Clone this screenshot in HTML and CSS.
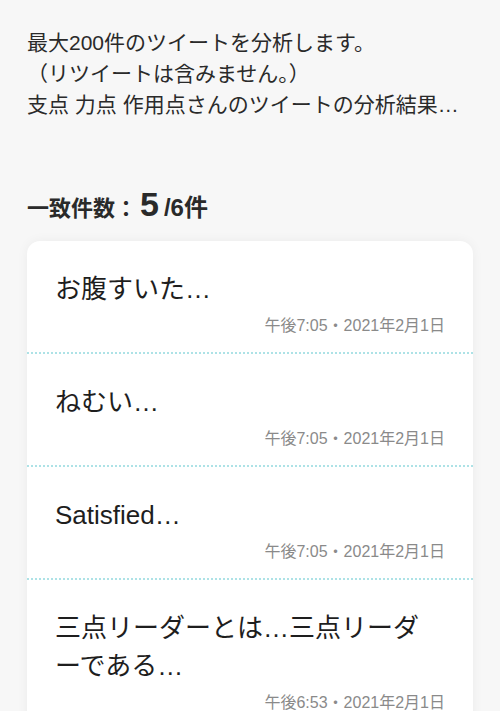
FILE: index.html
```html
<!DOCTYPE html>
<html lang="ja">
<head>
<meta charset="utf-8">
<title>分析結果</title>
<link rel="stylesheet" href="styles.css">
</head>
<body>
<main class="page">
  <p class="intro">最大200件のツイートを分析します。<br>（リツイートは含みません。）<br>支点 力点 作用点さんのツイートの分析結果…</p>
  <h2 class="count"><span class="count-label">一致件数：</span><span class="count-num">5</span><span class="count-total">/6件</span></h2>
  <section class="card">
    <article class="item">
      <p class="item-text">お腹すいた…</p>
      <p class="item-date">午後7:05・2021年2月1日</p>
    </article>
    <article class="item">
      <p class="item-text">ねむい…</p>
      <p class="item-date">午後7:05・2021年2月1日</p>
    </article>
    <article class="item">
      <p class="item-text">Satisfied…</p>
      <p class="item-date">午後7:05・2021年2月1日</p>
    </article>
    <article class="item">
      <p class="item-text">三点リーダーとは…三点リーダーである…</p>
      <p class="item-date">午後6:53・2021年2月1日</p>
    </article>
  </section>
</main>
</body>
</html>
```
FILE: styles.css
```css
html, body {
  margin: 0;
  padding: 0;
  background: #f7f7f7;
}
body {
  font-family: "Liberation Sans", "Noto Sans CJK JP", sans-serif;
  color: #222;
}
.page {
  padding: 27px 27px 0 27px;
}
.intro {
  margin: 0;
  font-size: 21px;
  line-height: 31px;
  color: #2a2a2a;
}
.count {
  margin: 66px 0 0 0;
  font-size: 22px;
  line-height: 36px;
  font-weight: bold;
  color: #2a2a2a;
}
.count-num {
  font-size: 34px;
  margin: 0 5px 0 3px;
}
.count-total {
  font-size: 24px;
}
.card {
  margin-top: 14px;
  background: #fff;
  border-radius: 13px;
  box-shadow: 0 0 12px rgba(0, 0, 0, 0.05);
}
.item {
  padding: 29px 28px 16px 28px;
  border-bottom: 2px dotted #ade2e6;
}
.item-text {
  margin: 0 3px 8px 0;
  font-size: 26px;
  line-height: 38px;
  color: #1e1e1e;
}
.item-date {
  margin: 0;
  font-size: 16px;
  line-height: 20px;
  color: #8a8a8a;
  text-align: right;
}
```
